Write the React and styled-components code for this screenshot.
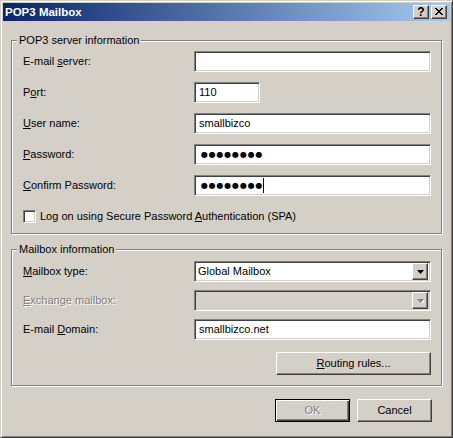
import React from "react";
import styled, { createGlobalStyle, css } from "styled-components";

const Global = createGlobalStyle`
  html, body { margin: 0; padding: 0; background: #d4d0c8; }
  * { box-sizing: border-box; }
`;

const FACE = "#d4d0c8";

const raised = css`
  border: 1px solid;
  border-color: #fff #404040 #404040 #fff;
  box-shadow: inset -1px -1px 0 #808080, inset 1px 1px 0 ${FACE};
  background: ${FACE};
`;

const sunken = css`
  border: 1px solid;
  border-color: #808080 #fff #fff #808080;
  box-shadow: inset 1px 1px 0 #404040, inset -1px -1px 0 ${FACE};
`;

const Window = styled.div`
  width: 453px;
  height: 438px;
  padding: 2px;
  background: ${FACE};
  border: 1px solid;
  border-color: ${FACE} #404040 #404040 ${FACE};
  box-shadow: inset 1px 1px 0 #fff, inset -1px -1px 0 #808080;
  font-family: "Liberation Sans", Arial, sans-serif;
  font-size: 11px;
  color: #000;
  display: flex;
  flex-direction: column;
`;

const TitleBar = styled.div`
  height: 18px;
  display: flex;
  align-items: center;
  padding-left: 2px;
  background: linear-gradient(to right, #0a246a, #a6caf0);
`;

const TitleText = styled.div`
  flex: 1;
  color: #fff;
  font-weight: bold;
  font-size: 11.5px;
  line-height: 14px;
`;

const TitleButtons = styled.div`
  display: flex;
  gap: 2px;
  margin-right: 3px;
`;

const TitleButton = styled.div`
  ${raised};
  width: 16px;
  height: 14px;
  display: flex;
  align-items: center;
  justify-content: center;
  font-weight: bold;
  font-size: 12px;
  line-height: 12px;
  padding-bottom: 1px;
`;

const Body = styled.div`
  padding: 19px 8px 0 8px;
  display: flex;
  flex-direction: column;
`;

const Group = styled.div`
  margin-top: ${(p) => p.$mt || 0}px;
  padding: 0 10px 10px 11px;
  border: 1px solid #808080;
  box-shadow: inset 1px 1px 0 #fff, 1px 1px 0 #fff;
`;

const Legend = styled.div`
  margin: -7px 0 0 -6px;
  padding: 0 2px;
  width: fit-content;
  line-height: 13px;
  background: ${FACE};
`;

const Fields = styled.div`
  margin-top: ${(p) => p.$mt}px;
  display: grid;
  grid-template-columns: 171px 1fr;
  grid-auto-rows: 21px;
  row-gap: ${(p) => p.$gap}px;
  align-items: center;
`;

const Label = styled.div`
  line-height: 13px;
  white-space: nowrap;
  ${(p) =>
    p.$disabled &&
    css`
      color: #808080;
      text-shadow: 1px 1px 0 #fff;
    `}
`;

const TextBox = styled.div`
  ${sunken};
  background: #fff;
  height: 21px;
  width: ${(p) => (p.$w ? `${p.$w}px` : "100%")};
  padding: 0 3px 0 4px;
  display: flex;
  align-items: center;
  line-height: 13px;
  white-space: nowrap;
`;

const Dots = styled.span`
  margin-left: 2px;
  font-family: "DejaVu Sans", sans-serif;
  font-size: 8px;
  letter-spacing: 0.8px;
  line-height: 13px;
`;

const Caret = styled.span`
  display: inline-block;
  width: 1px;
  height: 15px;
  margin-left: 0;
  background: #000;
`;

const Combo = styled.div`
  ${sunken};
  height: 21px;
  padding: 2px;
  display: flex;
  align-items: center;
  background: ${(p) => (p.$disabled ? FACE : "#fff")};
`;

const ComboValue = styled.div`
  flex: 1;
  padding-left: 1px;
  line-height: 13px;
`;

const ArrowButton = styled.div`
  ${raised};
  width: 16px;
  height: 17px;
  display: flex;
  align-items: center;
  justify-content: center;
`;

const CheckRow = styled.div`
  margin-top: 14px;
  display: flex;
  align-items: center;
  gap: 4px;
  height: 13px;
`;

const CheckBox = styled.div`
  ${sunken};
  width: 13px;
  height: 13px;
  background: #fff;
`;

const RightRow = styled.div`
  margin-top: ${(p) => p.$mt}px;
  padding-right: ${(p) => p.$pr || 0}px;
  display: flex;
  justify-content: flex-end;
  gap: 7px;
`;

const Button = styled.div`
  width: ${(p) => p.$w}px;
  height: 23px;
  display: flex;
  align-items: center;
  justify-content: center;
  line-height: 13px;
  background: ${FACE};
  ${(p) =>
    p.$default
      ? css`
          border: 1px solid #000;
          box-shadow: inset 1px 1px 0 #fff, inset -1px -1px 0 #404040,
            inset -2px -2px 0 #808080;
        `
      : raised};
  ${(p) =>
    p.$disabled &&
    css`
      color: #808080;
      text-shadow: 1px 1px 0 #fff;
    `}
`;

const Arrow = ({ disabled }) => (
  <svg width="7" height="4" viewBox="0 0 7 4">
    {disabled && <path d="M1 1h7L4.5 5z" fill="#fff" />}
    <path d="M0 0h7L3.5 4z" fill={disabled ? "#808080" : "#000"} />
  </svg>
);

const CloseGlyph = () => (
  <svg width="8" height="7" viewBox="0 0 8 7" shapeRendering="crispEdges">
    <path
      d="M0 0h2v1h1v1h2V1h1V0h2v1H7v1H6v1H5v1h1v1h1v1h1v1H6V6H5V5H3v1H2v1H0V6h1V5h1V4h1V3H2V2H1V1H0z"
      fill="#000"
    />
  </svg>
);

export default function App() {
  return (
    <>
      <Global />
      <Window>
        <TitleBar>
          <TitleText>POP3 Mailbox</TitleText>
          <TitleButtons>
            <TitleButton>?</TitleButton>
            <TitleButton>
              <CloseGlyph />
            </TitleButton>
          </TitleButtons>
        </TitleBar>
        <Body>
          <Group>
            <Legend>POP3 server information</Legend>
            <Fields $mt={4} $gap={10}>
              <Label>
                E-mail <u>s</u>erver:
              </Label>
              <TextBox />
              <Label>
                P<u>o</u>rt:
              </Label>
              <TextBox $w={66}>110</TextBox>
              <Label>
                <u>U</u>ser name:
              </Label>
              <TextBox>smallbizco</TextBox>
              <Label>
                <u>P</u>assword:
              </Label>
              <TextBox>
                <Dots>●●●●●●●●</Dots>
              </TextBox>
              <Label>
                <u>C</u>onfirm Password:
              </Label>
              <TextBox>
                <Dots>●●●●●●●●</Dots>
                <Caret />
              </TextBox>
            </Fields>
            <CheckRow>
              <CheckBox />
              <Label>
                Log on using Secure Password <u>A</u>uthentication (SPA)
              </Label>
            </CheckRow>
          </Group>
          <Group $mt={15}>
            <Legend>Mailbox information</Legend>
            <Fields $mt={5} $gap={8}>
              <Label>
                <u>M</u>ailbox type:
              </Label>
              <Combo>
                <ComboValue>Global Mailbox</ComboValue>
                <ArrowButton>
                  <Arrow />
                </ArrowButton>
              </Combo>
              <Label $disabled>
                <u>E</u>xchange mailbox:
              </Label>
              <Combo $disabled>
                <ComboValue />
                <ArrowButton>
                  <Arrow disabled />
                </ArrowButton>
              </Combo>
              <Label>
                E-mail <u>D</u>omain:
              </Label>
              <TextBox>smallbizco.net</TextBox>
            </Fields>
            <RightRow $mt={12}>
              <Button $w={155}>
                <span>
                  <u>R</u>outing rules...
                </span>
              </Button>
            </RightRow>
          </Group>
          <RightRow $mt={13} $pr={10}>
            <Button $w={75} $default $disabled>
              OK
            </Button>
            <Button $w={75}>Cancel</Button>
          </RightRow>
        </Body>
      </Window>
    </>
  );
}
